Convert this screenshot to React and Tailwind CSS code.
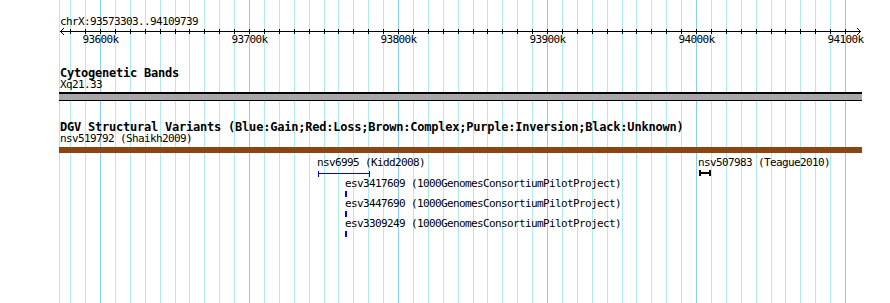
const mono = "font-['DejaVu_Sans_Mono','Liberation_Mono',monospace]";
const reg = `${mono} text-[11px] tracking-[-0.62px] leading-[12px] text-black whitespace-nowrap`;
const bold = `${mono} text-[12px] font-bold tracking-[-0.22px] leading-[12px] text-black whitespace-nowrap`;

// grid positions: one line every 10 kb, 93600k sits at x=100, 14.9px per 10 kb
const steps = Array.from({ length: 53 }, (_, i) => i - 2);
const px = (k) => Math.round(100 + 14.9 * k);

function Grid() {
  return (
    <svg className="absolute inset-0" width="890" height="303">
      <line x1="59.5" y1="0" x2="59.5" y2="303" stroke="#afeeee" />
      {steps.map((k) => (
        <line
          key={k}
          x1={px(k) + 0.5}
          y1="0"
          x2={px(k) + 0.5}
          y2="303"
          stroke={k % 10 === 0 ? "#87cefa" : "#afeeee"}
        />
      ))}
    </svg>
  );
}

function Ruler() {
  const font = { fontFamily: "'DejaVu Sans Mono', 'Liberation Mono', monospace", fontSize: 11, letterSpacing: "-0.62px" };
  return (
    <svg width="890" height="67" className="block">
      <text x="60" y="25" style={font}>chrX:93573303..94109739</text>
      <line x1="60" y1="31.5" x2="861" y2="31.5" stroke="black" />
      <polyline points="64,28 60.5,31.5 64,35" fill="none" stroke="black" />
      <polyline points="857,28 860.5,31.5 857,35" fill="none" stroke="black" />
      {steps.map((k) => (
        <line key={k} x1={px(k) + 0.5} y1="29" x2={px(k) + 0.5} y2="34" stroke="black" />
      ))}
      {[0, 10, 20, 30, 40, 50].map((k, i) => (
        <text key={k} x={px(k) + 0.5} y="43" textAnchor="middle" style={font}>
          {93600 + i * 100}k
        </text>
      ))}
    </svg>
  );
}

function Span({ width, color }) {
  return (
    <svg width={width} height="9" className="block">
      <line x1="0.5" y1="2" x2="0.5" y2="8" stroke={color} />
      <line x1={width - 0.5} y1="2" x2={width - 0.5} y2="8" stroke={color} />
      <line x1="0" y1="4.5" x2={width} y2="4.5" stroke={color} />
    </svg>
  );
}

function SmallSpan() {
  return (
    <svg width="12" height="9" className="block">
      <rect x="0" y="1" width="2" height="6" fill="black" />
      <rect x="10" y="1" width="2" height="6" fill="black" />
      <rect x="0" y="3" width="12" height="2" fill="black" />
    </svg>
  );
}

function Tick() {
  return (
    <div className="h-[8px] pt-[1px]">
      <div className="w-[2px] h-[6px] bg-[#0000ff]" />
    </div>
  );
}

const esv = ["esv3417609", "esv3447690", "esv3309249"];

export default function App() {
  return (
    <div className="relative w-[890px] h-[303px] bg-white overflow-hidden">
      <Grid />
      <div className="relative flex flex-col">
        <Ruler />

        <div className={`${bold} pl-[60px]`}>Cytogenetic Bands</div>
        <div className={`${reg} pl-[60px]`}>Xq21.33</div>
        <div className="ml-[59px] w-[803px] mt-[1px] border-t-2 border-b border-black bg-[#a9a6a9] h-[9px]" />

        <div className={`${bold} pl-[60px] mt-[20px]`}>
          DGV Structural Variants (Blue:Gain;Red:Loss;Brown:Complex;Purple:Inversion;Black:Unknown)
        </div>
        <div className={`${reg} pl-[60px]`}>nsv519792 (Shaikh2009)</div>
        <div className="ml-[59px] w-[803px] mt-[2px] h-[6px] bg-[#8b4513]" />

        <div className="flex mt-[4px]">
          <div className="ml-[317px] w-[381px] flex flex-col">
            <div className={reg}>nsv6995 (Kidd2008)</div>
            <div className="pl-[1px]">
              <Span width={52} color="#0000ff" />
            </div>
            <div className="pl-[28px] flex flex-col">
              {esv.map((id) => (
                <div key={id}>
                  <div className={reg}>{id} (1000GenomesConsortiumPilotProject)</div>
                  <Tick />
                </div>
              ))}
            </div>
          </div>
          <div className="flex flex-col">
            <div className={reg}>nsv507983 (Teague2010)</div>
            <div className="pl-[1px]">
              <SmallSpan />
            </div>
          </div>
        </div>
      </div>
    </div>
  );
}
